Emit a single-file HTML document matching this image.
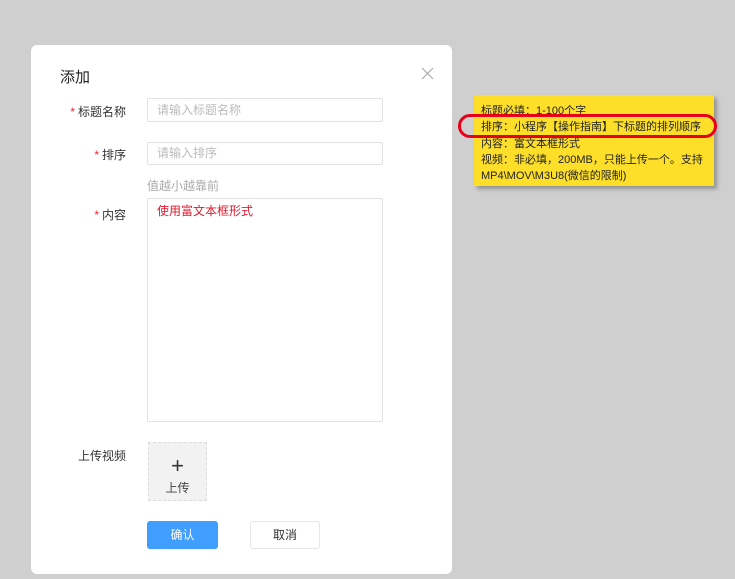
<!DOCTYPE html>
<html><head><meta charset="utf-8"><style>
body{margin:0;width:735px;height:579px;background:#cfcfcf;position:relative;overflow:hidden;font-family:"Liberation Sans","Noto Sans CJK SC",sans-serif;font-size:12px;color:#333}
.a{position:absolute}
.dlg{left:31px;top:45px;width:421px;height:529px;background:#fff;border-radius:6px}
.lbl{width:95px;text-align:right;left:31px;color:#333}
.lbl i{color:#f5222d;font-style:normal;margin-right:3px}
.inp{left:147px;width:236px;border:1px solid #e2e2e2;border-radius:2px;background:#fff;color:#bbb;box-sizing:border-box;padding-left:9px}
</style></head><body>
<div class="a dlg"></div>
<div class="a" style="left:60px;top:66px;font-size:15px;color:#222">添加</div>
<svg class="a" style="left:421px;top:67px" width="13" height="13"><path d="M1 1L12 12M12 1L1 12" stroke="#aaa" stroke-width="1.2"/></svg>
<div class="a lbl" style="top:103px"><i>*</i>标题名称</div>
<div class="a inp" style="top:98px;height:24px;line-height:22px">请输入标题名称</div>
<div class="a lbl" style="top:146px"><i>*</i>排序</div>
<div class="a inp" style="top:142px;height:23px;line-height:21px">请输入排序</div>
<div class="a" style="left:147px;top:177px;color:#aaa">值越小越靠前</div>
<div class="a lbl" style="top:206px"><i>*</i>内容</div>
<div class="a inp" style="top:198px;height:224px;padding-top:4px;color:#e0182d;line-height:16px">使用富文本框形式</div>
<div class="a lbl" style="top:447px">上传视频</div>
<div class="a" style="left:148px;top:442px;width:59px;height:59px;background:#f2f2f2;border:1px dashed #ddd;box-sizing:border-box;text-align:center">
<div style="font-size:22px;line-height:22px;margin-top:12px;color:#333">+</div><div style="margin-top:2px;color:#444">上传</div></div>
<div class="a" style="left:147px;top:521px;width:71px;height:28px;background:#409eff;border-radius:3px;color:#fff;text-align:center;line-height:28px">确认</div>
<div class="a" style="left:250px;top:521px;width:70px;height:28px;border:1px solid #e6e6e6;box-sizing:border-box;border-radius:3px;background:#fff;text-align:center;line-height:26px;color:#333">取消</div>
<div class="a" style="left:474px;top:95px;width:240px;height:91px;background:#fddf2a;box-shadow:3px 3px 4px rgba(0,0,0,.3);box-sizing:border-box;padding:8px 0 0 7px;font-size:11px;line-height:16.3px;color:#222;white-space:nowrap">标题必填：1-100个字<br>排序：小程序【操作指南】下标题的排列顺序<br>内容：富文本框形式<br>视频：非必填，200MB，只能上传一个。支持<br>MP4\MOV\M3U8(微信的限制)</div>
<div class="a" style="left:458px;top:114px;width:253px;height:18px;border:3px solid #e8001a;border-radius:12px"></div>
</body></html>
